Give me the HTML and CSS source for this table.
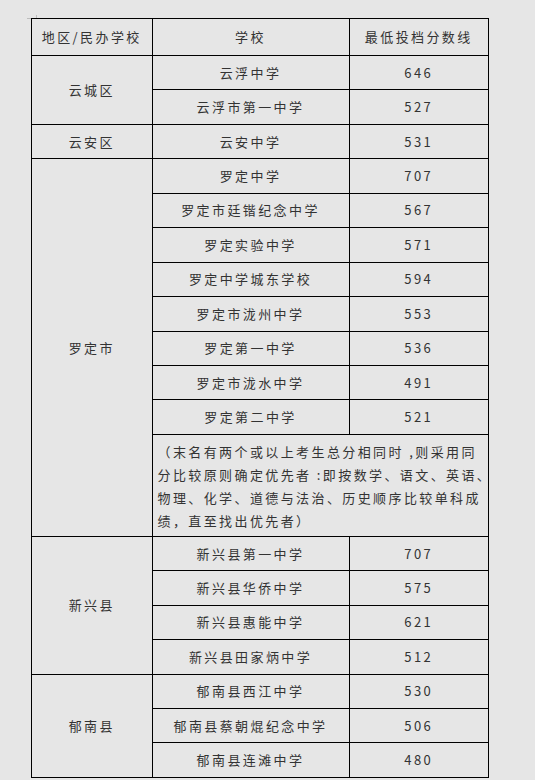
FILE: index.html
```html
<!DOCTYPE html>
<html lang="zh-CN">
<head>
<meta charset="utf-8">
<title>最低投档分数线</title>
<link rel="stylesheet" href="styles.css">
</head>
<body>
<div class="page">
  <table class="scores">
    <colgroup>
      <col class="c-area"><col class="c-school"><col class="c-score">
    </colgroup>
    <thead>
      <tr class="head"><th>地区/民办学校</th><th>学校</th><th>最低投档分数线</th></tr>
    </thead>
    <tbody>
      <tr><td rowspan="2">云城区</td><td>云浮中学</td><td>646</td></tr>
      <tr><td>云浮市第一中学</td><td>527</td></tr>
      <tr><td>云安区</td><td>云安中学</td><td>531</td></tr>
      <tr><td rowspan="9">罗定市</td><td>罗定中学</td><td>707</td></tr>
      <tr><td>罗定市廷锴纪念中学</td><td>567</td></tr>
      <tr><td>罗定实验中学</td><td>571</td></tr>
      <tr><td>罗定中学城东学校</td><td>594</td></tr>
      <tr><td>罗定市泷州中学</td><td>553</td></tr>
      <tr><td>罗定第一中学</td><td>536</td></tr>
      <tr><td>罗定市泷水中学</td><td>491</td></tr>
      <tr><td>罗定第二中学</td><td>521</td></tr>
      <tr class="note-row"><td colspan="2" class="note"><span class="ln">（末名有两个或以上考生总分相同时 ,则采用同</span><span class="ln">分比较原则确定优先者 :即按数学、语文、英语、</span><span class="ln">物理、化学、道德与法治、历史顺序比较单科成</span><span class="ln">绩，直至找出优先者）</span></td></tr>
      <tr><td rowspan="4">新兴县</td><td>新兴县第一中学</td><td>707</td></tr>
      <tr><td>新兴县华侨中学</td><td>575</td></tr>
      <tr><td>新兴县惠能中学</td><td>621</td></tr>
      <tr><td>新兴县田家炳中学</td><td>512</td></tr>
      <tr><td rowspan="3">郁南县</td><td>郁南县西江中学</td><td>530</td></tr>
      <tr><td>郁南县蔡朝焜纪念中学</td><td>506</td></tr>
      <tr><td>郁南县连滩中学</td><td>480</td></tr>
    </tbody>
  </table>
</div>
</body>
</html>
```

FILE: styles.css
```css
html, body {
  margin: 0;
  padding: 0;
  background: #e6e6e6;
}
.page {
  position: relative;
  padding: 18px 0 0 31px;
  font-family: "Noto Sans CJK SC", "Noto Sans", sans-serif;
  color: #333;
}
.page::before {
  content: "";
  position: absolute;
  left: 27px;
  top: 18px;
  width: 4px;
  height: 1px;
  background: #bdbdbd;
}
.page::after {
  content: "";
  position: absolute;
  left: 36px;
  top: 15px;
  width: 1px;
  height: 3px;
  background: #bdbdbd;
}
.scores {
  border-collapse: collapse;
  table-layout: fixed;
  width: 457px;
  font-size: 13px;
  letter-spacing: 2.4px;
}
.c-area { width: 120.5px; }
.c-school { width: 197px; }
.c-score { width: 139.5px; }
.scores th,
.scores td {
  border: 1px solid #000;
  padding: 0;
  text-align: center;
  vertical-align: middle;
  font-weight: normal;
  line-height: 18px;
}
.scores tr { height: 34.45px; }
.scores tr.head { height: 37px; }
.scores td.note {
  text-align: left;
  padding: 5px 4px 4px 5px;
  line-height: 23px;
  letter-spacing: 2.4px;
}
.note .ln {
  display: block;
  white-space: nowrap;
}
```
